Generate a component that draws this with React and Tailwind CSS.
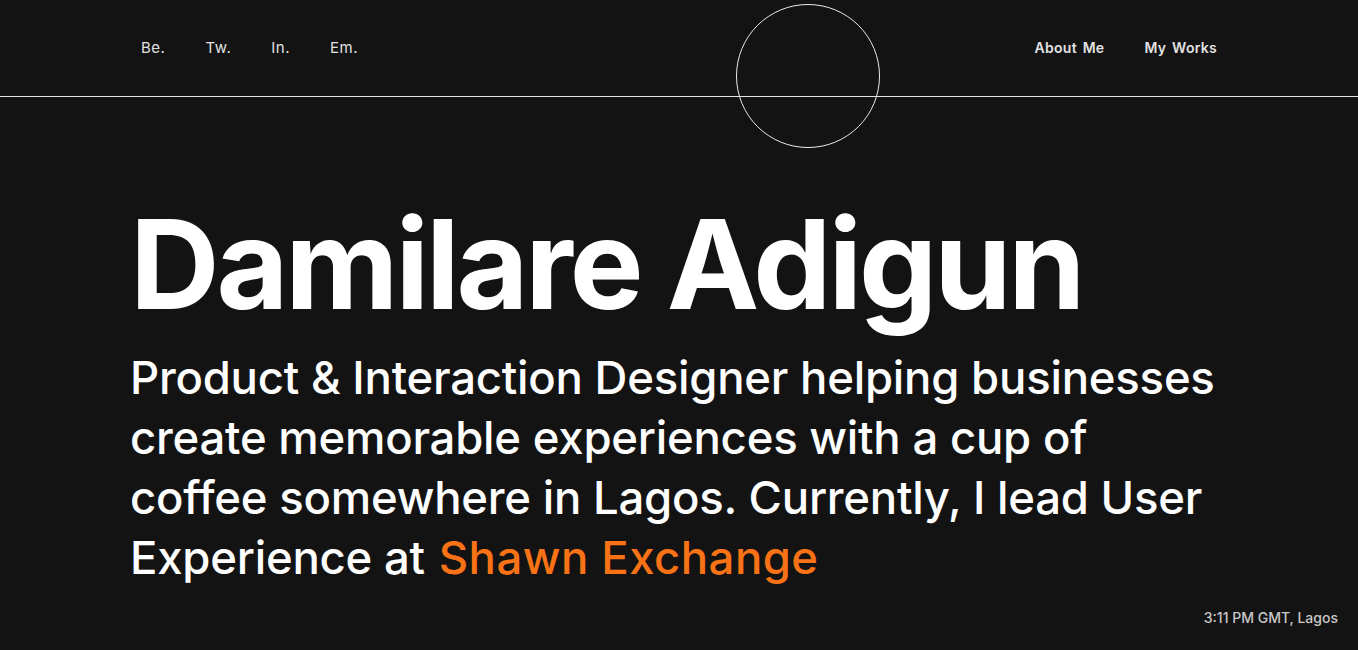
import React from 'react';

const socials = ['Be.', 'Tw.', 'In.', 'Em.'];

export default function App() {
  return (
    <div className="relative h-[650px] w-full overflow-hidden bg-[#131313] text-white font-['Inter',sans-serif]">
      {/* header */}
      <header className="relative h-[97px] border-b border-[#e5e5e5]">
        <div className="flex h-[96px] items-center justify-between pl-[141px] pr-[141px]">
          <nav className="flex gap-[40px] pt-[1px] text-[15px] tracking-[0.035em] text-[#e2e2e2]">
            {socials.map((s) => (
              <a key={s} href="#">{s}</a>
            ))}
          </nav>
          <nav className="flex gap-[40px] pb-[1px] text-[14px] font-semibold tracking-[0.02em] text-[#e2e2e2] [word-spacing:2px]">
            <a href="#">About Me</a>
            <a href="#">My Works</a>
          </nav>
        </div>
        <div className="absolute left-[736px] top-[4px] h-[144px] w-[144px] rounded-full border border-[#e8e8e8]" />
      </header>

      {/* hero */}
      <main className="pl-[130px] pt-[105px]">
        <h1 className="text-[124px] font-bold leading-[124px] tracking-[-0.025em]">Damilare Adigun</h1>
        <p className="mt-[22px] w-[1095px] text-[45.5px] font-medium leading-[60px] tracking-[-0.005em]">
          Product &amp; Interaction Designer helping businesses create memorable experiences with a cup of
          coffee somewhere in Lagos. Currently, I lead User Experience at{' '}
          <span className="pl-[2px] tracking-[0.01em] text-[#f97316]">Shawn Exchange</span>
        </p>
      </main>

      <div className="absolute bottom-[22px] right-[20px] text-[14px] font-medium text-[#c9c9c9]">
        3:11 PM GMT, Lagos
      </div>
    </div>
  );
}
